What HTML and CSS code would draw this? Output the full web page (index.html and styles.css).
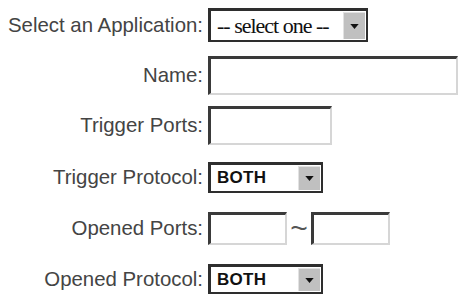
FILE: index.html
```html
<!DOCTYPE html>
<html>
<head>
<meta charset="utf-8">
<link rel="stylesheet" href="styles.css">
</head>
<body>
<form class="form">
  <div class="row r1">
    <label class="label">Select an Application:</label>
    <div class="select app">
      <span class="value serif">-- select one --</span>
      <span class="btn"><svg width="9" height="5" viewBox="0 0 10 6"><path d="M0 0H10L5 6Z" fill="#111"/></svg></span>
    </div>
  </div>
  <div class="row r2">
    <label class="label">Name:</label>
    <input class="text name" type="text">
  </div>
  <div class="row r3">
    <label class="label">Trigger Ports:</label>
    <input class="text ports" type="text">
  </div>
  <div class="row r4">
    <label class="label">Trigger Protocol:</label>
    <div class="select proto">
      <span class="value bold">BOTH</span>
      <span class="btn"><svg width="9" height="5" viewBox="0 0 10 6"><path d="M0 0H10L5 6Z" fill="#111"/></svg></span>
    </div>
  </div>
  <div class="row r5">
    <label class="label">Opened Ports:</label>
    <input class="text half" type="text">
    <span class="tilde">~</span>
    <input class="text half" type="text">
  </div>
  <div class="row r6">
    <label class="label">Opened Protocol:</label>
    <div class="select proto p2">
      <span class="value bold">BOTH</span>
      <span class="btn"><svg width="9" height="5" viewBox="0 0 10 6"><path d="M0 0H10L5 6Z" fill="#111"/></svg></span>
    </div>
  </div>
</form>
</body>
</html>
```
FILE: styles.css
```css
html, body {
  margin: 0;
  padding: 0;
  background: #ffffff;
}
.form {
  display: flex;
  flex-direction: column;
  padding-top: 8px;
  font-family: "Liberation Sans", Arial, sans-serif;
}
.row {
  display: flex;
  align-items: center;
}
.r1 { height: 34px; }
.r2 { height: 39px; margin-top: 14px; }
.r3 { height: 39px; margin-top: 11px; }
.r4 { height: 31px; margin-top: 17px; }
.r5 { height: 33px; margin-top: 19px; }
.r6 { height: 30px; margin-top: 19px; }
.label {
  width: 203px;
  text-align: right;
  font-size: 20.4px;
  color: #444444;
  margin-right: 5px;
  white-space: nowrap;
}
.text {
  box-sizing: border-box;
  height: 100%;
  margin: 0;
  padding: 0;
  background: #fff;
  border-style: solid;
  border-color: #3a3a3a #d6d6d6 #d6d6d6 #3a3a3a;
  border-width: 3px 2px 2px 3px;
  outline: none;
}
.name { width: 250px; }
.ports { width: 124px; }
.half { width: 79px; }
.tilde {
  width: 24px;
  text-align: center;
  font-size: 30px;
  color: #555;
  line-height: 1;
  margin-top: -2px;
}
.select {
  box-sizing: border-box;
  height: 100%;
  display: flex;
  align-items: stretch;
  background: #fff;
  border-style: solid;
  border-color: #2e2e2e;
  border-width: 3px 2px 2px 3px;
}
.app { width: 160px; }
.proto { width: 115px; }
.value {
  flex: 1;
  display: flex;
  align-items: center;
  color: #111;
  white-space: nowrap;
}
.serif {
  font-family: "Liberation Serif", "Times New Roman", serif;
  font-size: 22px;
  letter-spacing: -1px;
  padding-left: 6px;
}
.bold {
  font-weight: bold;
  font-size: 17px;
  letter-spacing: 0.3px;
  padding-left: 6px;
}
.btn {
  width: 21px;
  margin: 1px 1px 1px 0;
  background: #c0c0c0;
  border-top: 1px solid #e2e2e2;
  border-left: 1px solid #e2e2e2;
  display: flex;
  align-items: center;
  justify-content: center;
}
```
